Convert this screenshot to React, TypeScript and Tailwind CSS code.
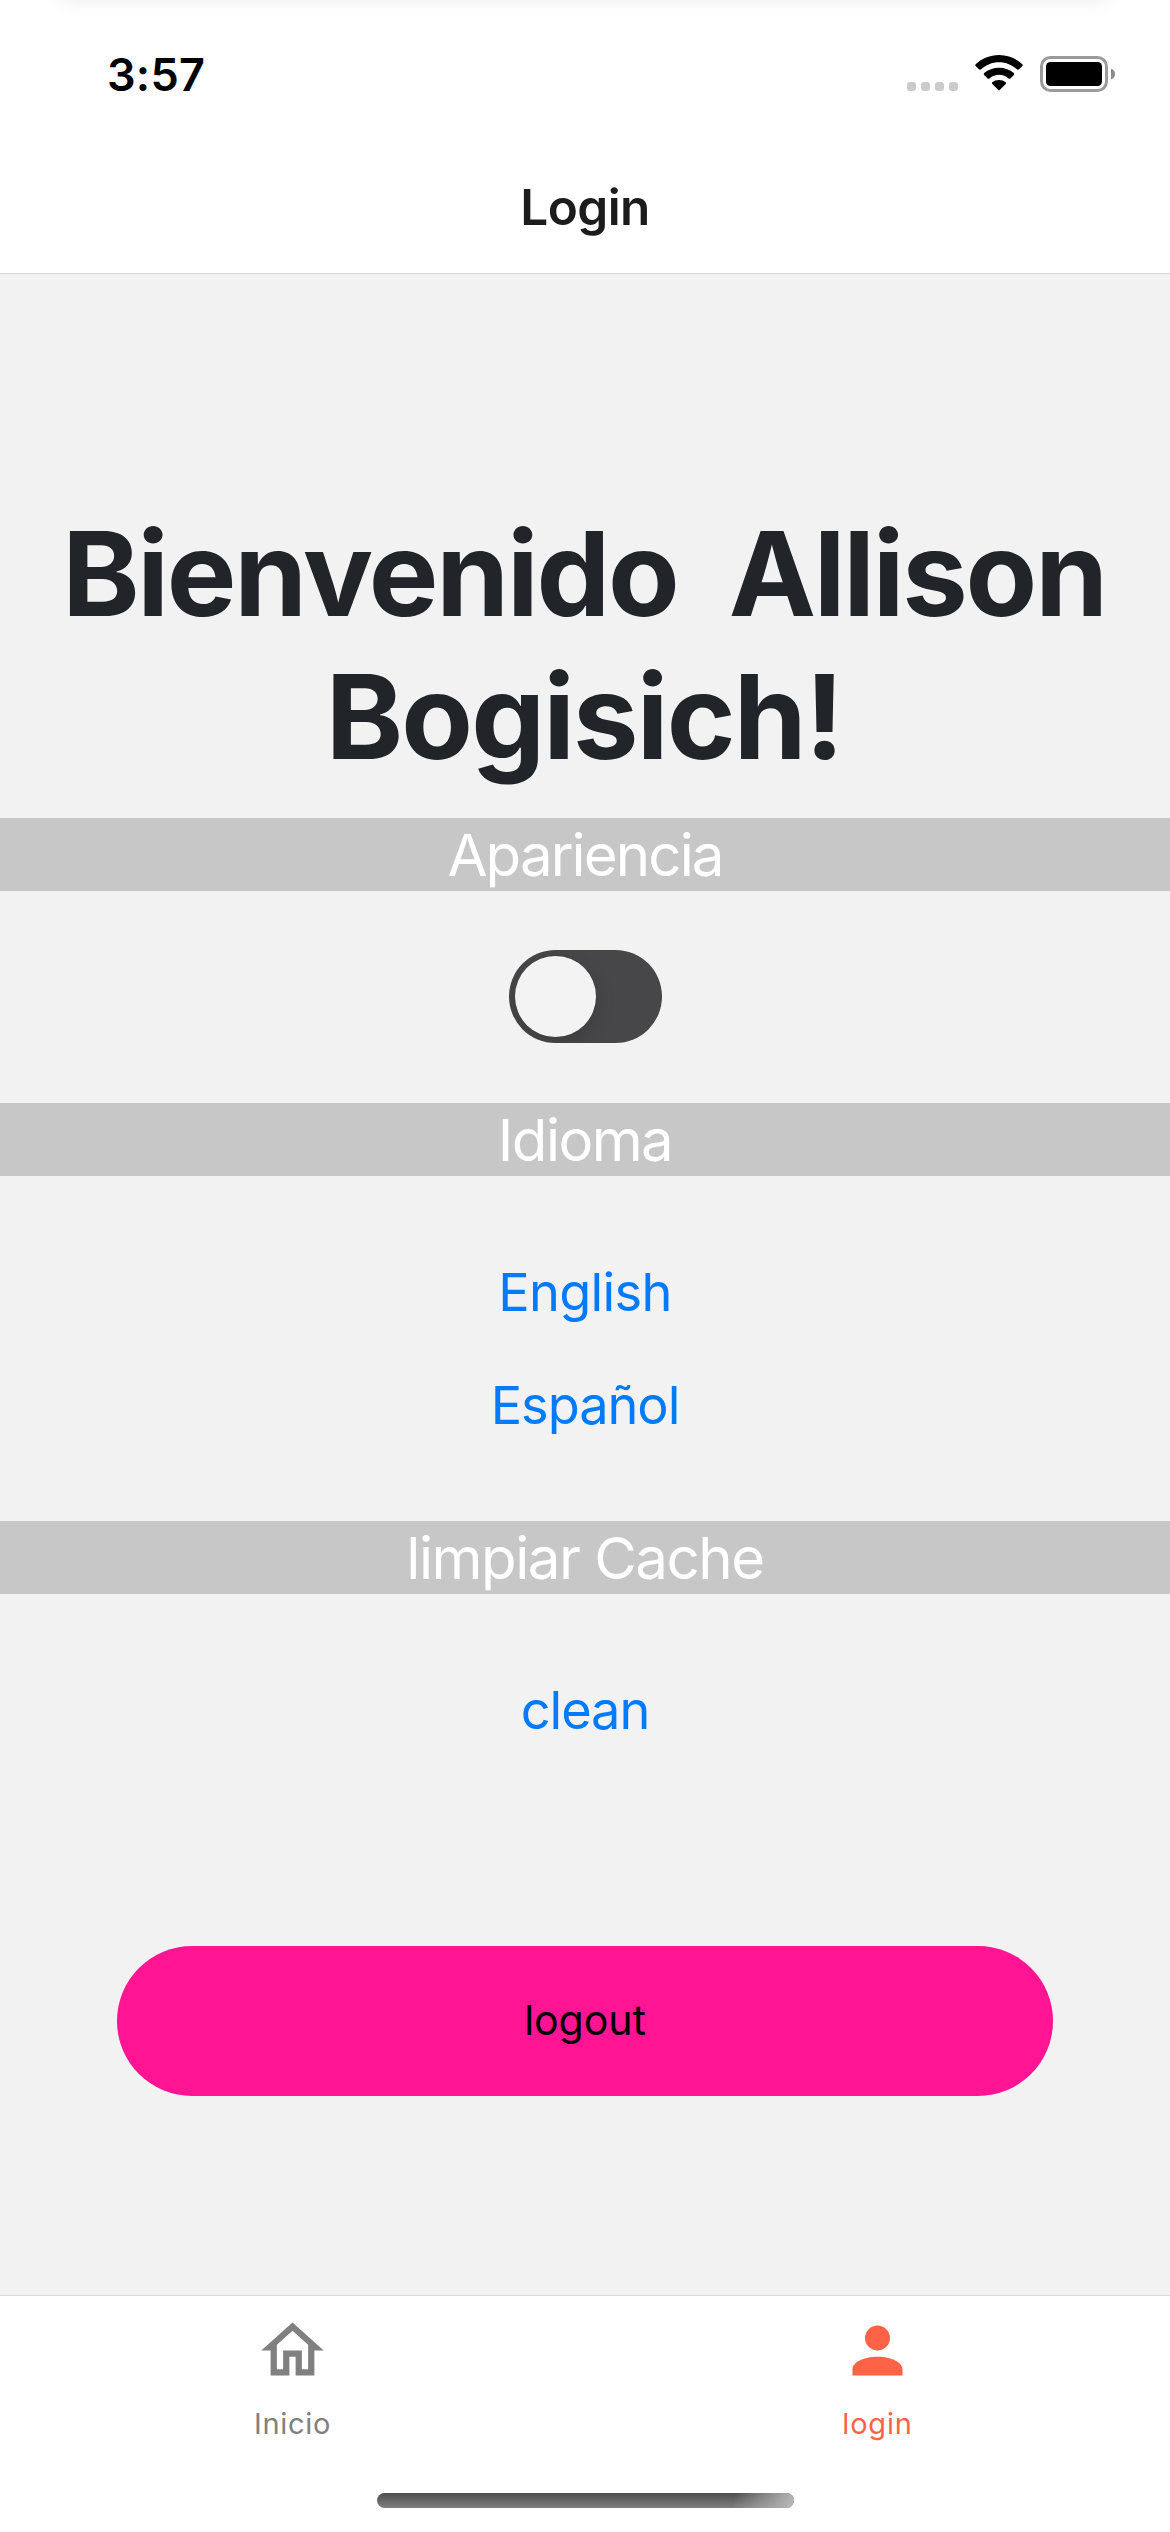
import type { ReactNode } from 'react';

function StatusBar() {
  return (
    <div className="flex h-[141px] items-start justify-between pl-[107px] pr-[55px]">
      <span className="mt-[50px] text-[45px] leading-[49px] font-semibold tracking-[0.24px] text-black">3:57</span>
      <div className="mt-[55px] flex h-[38px]">
        <div className="mt-[27px] flex gap-[5px]">
          <i className="size-[9px] rounded-[3px] bg-[#cbcbcb]" />
          <i className="size-[9px] rounded-[3px] bg-[#cbcbcb]" />
          <i className="size-[9px] rounded-[3px] bg-[#cbcbcb]" />
          <i className="size-[9px] rounded-[3px] bg-[#cbcbcb]" />
        </div>
        <svg className="ml-[17px] h-[36px] w-[48px]" viewBox="0 0 48 36" fill="#000">
          <path d="M24 7.2C30.9 7.2 37.2 9.9 41.9 14.3Q43 15.2 44 14.3L47.4 11Q48.2 10 47.3 9.2C41.2 3.5 33 0 24 0S6.8 3.5.7 9.2Q-.2 10 .6 11L4 14.3Q5 15.2 6.1 14.3C10.8 9.9 17.1 7.2 24 7.2Z" />
          <path d="M24 19.8C27.6 19.8 31 21.1 33.5 23.4Q34.6 24.3 35.6 23.3L38.9 20Q39.8 19 38.8 18.1C34.9 14.7 29.7 12.7 24 12.7S13.1 14.7 9.2 18.1Q8.2 19 9.1 20L12.4 23.3Q13.4 24.3 14.5 23.4C17 21.1 20.4 19.8 24 19.8Z" />
          <path d="M24 25Q28 25 30.7 27.3Q31.5 28.2 30.7 29L24.7 35.1Q24 35.8 23.3 35.1L17.3 29Q16.5 28.2 17.3 27.3Q20 25 24 25Z" />
        </svg>
        <svg className="ml-[17px] mt-[1px] h-[36px] w-[75px]" viewBox="0 0 75 36">
          <rect x="1.5" y="1.5" width="65" height="33" rx="9" fill="none" stroke="#9b9b9b" strokeWidth="3" />
          <rect x="6" y="6" width="56" height="24" rx="4.5" fill="#000" />
          <path d="M71 12.5Q75 14 75 18T71 23.5Z" fill="#8c8c8c" />
        </svg>
      </div>
    </div>
  );
}

function SectionBar({ children }: { children: ReactNode }) {
  return <div className="h-[73px] bg-[#c7c7c7] pt-px text-center text-[58.2px] leading-[72px] text-white">{children}</div>;
}

export default function App() {
  return (
    <div className="flex h-[2532px] w-[1170px] flex-col overflow-hidden bg-[#f2f2f2] font-['Inter',sans-serif]">
      <header className="relative h-[274px] border-b border-[#d8d8d8] bg-white">
        <div className="absolute -top-[20px] left-[60px] h-[20px] w-[1050px] shadow-[0_0_20px_rgba(0,0,0,0.08)]" />
        <StatusBar />
        <h1 className="pt-[36px] text-center text-[49.5px] leading-[60px] font-semibold tracking-[-0.586px] text-[#1c1c1e]">Login</h1>
      </header>

      <main className="flex flex-1 flex-col pt-[228px]">
        <h2 className="mb-[30px] pr-[2px] text-center text-[117px] leading-[143px] font-bold whitespace-nowrap text-[#212429]">
          <span className="block tracking-[-2.2px]">Bienvenido{'\u00a0 '}Allison</span>
          <span className="block tracking-[-1.84px]">Bogisich!</span>
        </h2>

        <SectionBar><span className="tracking-[-1.9px]">Apariencia</span></SectionBar>
        <div className="flex h-[212px] justify-center pt-[59px]">
          <button role="switch" aria-checked="false" className="ml-px h-[93px] w-[153px] overflow-hidden rounded-full bg-[#474749] p-[6px]">
            <span className="block size-[81px] rounded-full bg-[#f3f3f3] shadow-[0_6px_20px_rgba(0,0,0,0.15)]" />
          </button>
        </div>

        <SectionBar><span className="tracking-[-1.58px]">Idioma</span></SectionBar>
        <div className="flex h-[345px] flex-col items-center gap-[49px] pt-[84px] text-[52.3px] leading-[64px] text-[#007bff]">
          <button className="tracking-[-0.67px]">English</button>
          <button className="tracking-[-1.03px]">Español</button>
        </div>

        <SectionBar><span className="tracking-[-1.47px]">limpiar Cache</span></SectionBar>
        <div className="flex h-[352px] flex-col items-center pt-[84px] text-[52.3px] leading-[64px] text-[#007bff]">
          <button className="tracking-[-1.05px]">clean</button>
        </div>

        <button className="mx-[117px] flex h-[150px] items-center justify-center rounded-full bg-[#ff1493] pb-[2px] text-[41px] leading-[50px] text-black">
          <span className="tracking-[-0.06px]">logout</span>
        </button>
      </main>

      <nav className="flex h-[237px] flex-col border-t border-[#d8d8d8] bg-white">
        <div className="grid h-[197px] grid-cols-2 pt-[17px] text-[29px] leading-[35px]">
          <a className="flex flex-col items-center gap-[18px] text-[#808080]">
            <svg className="size-[75px]" viewBox="0 0 24 24" fill="currentColor">
              <path d="M12 5.69L17 10.19V18H15V12H9V18H7V10.19L12 5.69M12 3L2 12H5V20H11V14H13V20H19V12H22" />
            </svg>
            <span className="tracking-[0.7px]">Inicio</span>
          </a>
          <a className="flex flex-col items-center gap-[18px] text-[#ff6347]">
            <svg className="size-[75px]" viewBox="0 0 24 24" fill="currentColor">
              <path d="M12 4A4 4 0 0 1 16 8A4 4 0 0 1 12 12A4 4 0 0 1 8 8A4 4 0 0 1 12 4M12 14C16.42 14 20 15.79 20 18V20H4V18C4 15.79 7.58 14 12 14Z" />
            </svg>
            <span className="tracking-[0.8px]">login</span>
          </a>
        </div>
        <div className="ml-[377px] h-[15px] w-[417px] overflow-hidden rounded-full bg-gradient-to-b from-[#4d4f4e] to-[#7f7f7f]">
          <div className="ml-auto h-full w-[80px] bg-[linear-gradient(100deg,transparent_25%,#b8b8b8)]" />
        </div>
      </nav>
    </div>
  );
}
